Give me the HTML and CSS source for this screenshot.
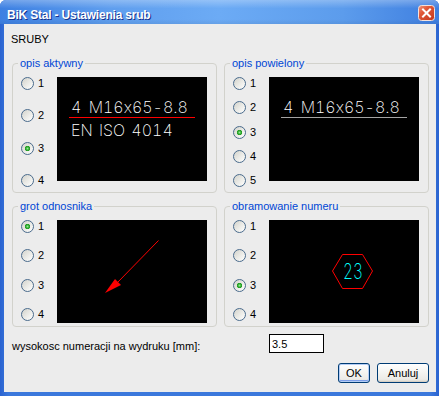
FILE: index.html
```html
<!DOCTYPE html>
<html lang="pl">
<head>
    <meta charset="UTF-8">
    <title>BiK Stal - Ustawienia srub</title>
    <link rel="stylesheet" href="styles.css">
</head>
<body>
    <!-- Dialog window -->
    <div class="window">
        <div class="titlebar">
            <span class="title">BiK Stal - Ustawienia srub</span>
            <button class="close" aria-label="Zamknij">
                <svg width="17" height="16" viewBox="0 0 17 16" aria-hidden="true">
                    <defs>
                        <linearGradient id="closeFill" x1="0" y1="0" x2="1" y2="1">
                            <stop offset="0" stop-color="#f19a80"/>
                            <stop offset="0.35" stop-color="#e0593a"/>
                            <stop offset="1" stop-color="#c2361c"/>
                        </linearGradient>
                    </defs>
                    <rect x="0.5" y="0.5" width="16" height="15" rx="3" fill="url(#closeFill)" stroke="#f4e2dc"/>
                    <path d="M5 4.5 L12 11.5 M12 4.5 L5 11.5" stroke="#fff" stroke-width="2" stroke-linecap="square"/>
                </svg>
            </button>
        </div>

        <div class="client">
            <p class="heading">SRUBY</p>

            <div class="groups">
                <!-- opis aktywny -->
                <section class="group">
                    <h2 class="legend">opis aktywny</h2>
                    <div class="group-body">
                        <div class="options options-top">
                            <label class="option"><input type="radio" name="aktywny">1</label>
                            <label class="option"><input type="radio" name="aktywny">2</label>
                            <label class="option"><input type="radio" name="aktywny" checked>3</label>
                            <label class="option"><input type="radio" name="aktywny">4</label>
                        </div>
                        <div class="preview preview-top">
                            <div class="dim-line dim-red">4 M16x65-8.8</div>
                            <div class="dim-sub">EN ISO 4014</div>
                        </div>
                    </div>
                </section>

                <!-- opis powielony -->
                <section class="group">
                    <h2 class="legend">opis powielony</h2>
                    <div class="group-body">
                        <div class="options options-top">
                            <label class="option"><input type="radio" name="powielony">1</label>
                            <label class="option"><input type="radio" name="powielony">2</label>
                            <label class="option"><input type="radio" name="powielony" checked>3</label>
                            <label class="option"><input type="radio" name="powielony">4</label>
                            <label class="option"><input type="radio" name="powielony">5</label>
                        </div>
                        <div class="preview preview-top">
                            <div class="dim-line dim-gray">4 M16x65-8.8</div>
                        </div>
                    </div>
                </section>

                <!-- grot odnosnika -->
                <section class="group">
                    <h2 class="legend">grot odnosnika</h2>
                    <div class="group-body">
                        <div class="options options-bottom">
                            <label class="option"><input type="radio" name="grot" checked>1</label>
                            <label class="option"><input type="radio" name="grot">2</label>
                            <label class="option"><input type="radio" name="grot">3</label>
                            <label class="option"><input type="radio" name="grot">4</label>
                        </div>
                        <div class="preview preview-bottom">
                            <svg class="preview-art" width="150" height="103" viewBox="0 0 150 103" aria-hidden="true">
                                <line x1="101.5" y1="20.5" x2="60" y2="63" stroke="#f00" stroke-width="1"/>
                                <polygon points="48,73 58,59 64,65" fill="#f00"/>
                            </svg>
                        </div>
                    </div>
                </section>

                <!-- obramowanie numeru -->
                <section class="group">
                    <h2 class="legend">obramowanie numeru</h2>
                    <div class="group-body">
                        <div class="options options-bottom">
                            <label class="option"><input type="radio" name="ramka">1</label>
                            <label class="option"><input type="radio" name="ramka">2</label>
                            <label class="option"><input type="radio" name="ramka" checked>3</label>
                            <label class="option"><input type="radio" name="ramka">4</label>
                        </div>
                        <div class="preview preview-bottom">
                            <svg class="preview-art" width="150" height="103" viewBox="0 0 150 103">
                                <polygon points="63.5,51 73.5,34.5 93.5,34.5 103.5,51 93.5,68.5 73.5,68.5" fill="none" stroke="#f00" stroke-width="1"/>
                                <text class="badge-num" x="84" y="59" text-anchor="middle" textLength="20" lengthAdjust="spacingAndGlyphs">23</text>
                            </svg>
                        </div>
                    </div>
                </section>
            </div>

            <div class="field-row">
                <label class="field-label" for="wysokosc">wysokosc numeracji na wydruku [mm]:</label>
                <input id="wysokosc" class="field-input" type="text" value="3.5">
            </div>

            <div class="buttons">
                <button class="btn btn-ok">OK</button>
                <button class="btn btn-cancel">Anuluj</button>
            </div>
        </div>
    </div>
</body>
</html>
```

FILE: styles.css
```css
/* Reset and base styles */
*,
*::before,
*::after {
    margin: 0;
    padding: 0;
    box-sizing: border-box;
}

body {
    background: #ffffff;
    font-family: 'Liberation Sans', Arial, sans-serif;
    font-size: 11px;
    color: #000;
    overflow: hidden;
}

/* Window frame */
.window {
    width: 439px;
    height: 396px;
    display: flex;
    flex-direction: column;
    background: linear-gradient(to right, #2a63d0, #3b78dc 2%, #3b78dc 98%, #2a63d0);
    border-radius: 6px 6px 0 0;
    overflow: hidden;
}

.titlebar {
    flex: none;
    height: 24px;
    display: flex;
    align-items: flex-start;
    justify-content: space-between;
    padding: 0 4px 0 7px;
    background:
        linear-gradient(rgba(255, 255, 255, 0.28), rgba(255, 255, 255, 0) 35%, rgba(0, 0, 0, 0) 80%, rgba(0, 0, 0, 0.06)),
        linear-gradient(to right, #3d80e2 0%, #5f9eee 25%, #6cabf5 50%, #5c9cec 78%, #3f7fe0 100%);
}

.title {
    margin-top: 8px;
    color: #fff;
    font-weight: bold;
    font-size: 12px;
    line-height: 14px;
    letter-spacing: -0.2px;
    text-shadow: 1px 1px 0 #17338c;
}

.close {
    margin-top: 5px;
    width: 17px;
    height: 16px;
    border: 0;
    background: none;
    display: block;
}

.close svg {
    display: block;
}

/* Client area */
.client {
    flex: 1;
    margin: 0 3px 4px 4px;
    background: #ececec;
    display: flex;
    flex-direction: column;
}

.heading {
    padding: 9px 0 0 7px;
    line-height: 13px;
}

/* Group boxes */
.groups {
    display: grid;
    grid-template-columns: 205px 205px;
    grid-template-rows: 130px 121px;
    column-gap: 7px;
    row-gap: 13px;
    margin: 17px 0 0 8px;
}

.group {
    position: relative;
    border: 1px solid #d2d2cc;
    border-radius: 4px;
    padding: 13px 0 0 8px;
}

.legend {
    position: absolute;
    top: -7px;
    left: 5px;
    padding: 0 2px;
    background: #ececec;
    color: #0046d5;
    font-size: 11px;
    font-weight: normal;
    line-height: 13px;
}

.group-body {
    display: flex;
    align-items: flex-start;
}

.options {
    flex: none;
    width: 36px;
    display: flex;
    flex-direction: column;
    justify-content: space-between;
}

.options-top {
    height: 110px;
}

.options-bottom {
    height: 101px;
}

.option {
    display: flex;
    align-items: center;
    gap: 4px;
    height: 13px;
    line-height: 13px;
}

/* XP style radio */
.option input {
    appearance: none;
    -webkit-appearance: none;
    flex: none;
    width: 13px;
    height: 13px;
    margin: 0;
    border: 1px solid #4a6b8c;
    border-radius: 50%;
    background: linear-gradient(135deg, #d2d2cb 0%, #ececE8 55%, #ffffff 100%);
}

.option input:checked {
    background:
        radial-gradient(circle, #9be49b 0, #3bb83b 1.4px, #1f961f 2.4px, rgba(31, 150, 31, 0) 3px),
        linear-gradient(135deg, #d2d2cb 0%, #ececE8 55%, #ffffff 100%);
}

/* Black preview panels (thin CAD-like lettering) */
.preview {
    flex: none;
    width: 150px;
    background: #000;
    color: #fff;
    font-family: 'Inter', 'DejaVu Sans', sans-serif;
    font-weight: 200;
    font-size: 16px;
    font-feature-settings: 'tnum' 1, 'calt' 0;
    padding: 20px 0 0 12px;
}

.preview-top {
    height: 104px;
}

.preview-bottom {
    height: 103px;
    padding: 0;
}

.preview-art {
    display: block;
}

.dim-line {
    width: 126px;
    padding-left: 2px;
    line-height: 20px;
    white-space: nowrap;
    word-spacing: 3px;
}

.dim-red {
    border-bottom: 1px solid #f00;
}

.dim-gray {
    border-bottom: 1px solid #a4a4a4;
}

.dim-sub {
    margin-top: 2px;
    padding-left: 2px;
    line-height: 20px;
    white-space: nowrap;
    word-spacing: 2px;
}

.badge-num {
    fill: #00ffff;
    font-family: 'Inter', 'Liberation Sans', sans-serif;
    font-weight: 200;
    font-size: 22px;
}

/* Height field */
.field-row {
    display: flex;
    align-items: flex-start;
    margin-top: 7px;
    padding-left: 8px;
}

.field-label {
    flex: none;
    width: 257px;
    padding-top: 6px;
    line-height: 13px;
}

.field-input {
    width: 55px;
    height: 19px;
    border: 1px solid #000;
    background: #fff;
    padding: 1px 2px;
    font-family: 'Liberation Sans', Arial, sans-serif;
    font-size: 11px;
    line-height: 15px;
    color: #000;
    outline: none;
}

/* Buttons */
.buttons {
    display: flex;
    justify-content: flex-end;
    gap: 7px;
    margin: 10px 7px 0 0;
}

.btn {
    height: 20px;
    border: 1px solid #003c74;
    border-radius: 3px;
    background: linear-gradient(#ffffff 0%, #f6f6f3 40%, #ecebe6 85%, #d9d4c9 100%);
    font-family: 'Liberation Sans', Arial, sans-serif;
    font-size: 11px;
    color: #000;
    box-shadow: inset 0 -1px 0 #d6d0c5;
}

.btn-ok {
    width: 32px;
    box-shadow: inset 0 0 0 1px #b4cdf5, inset 0 -2px 0 #7d9ee8;
}

.btn-cancel {
    width: 52px;
}
```
